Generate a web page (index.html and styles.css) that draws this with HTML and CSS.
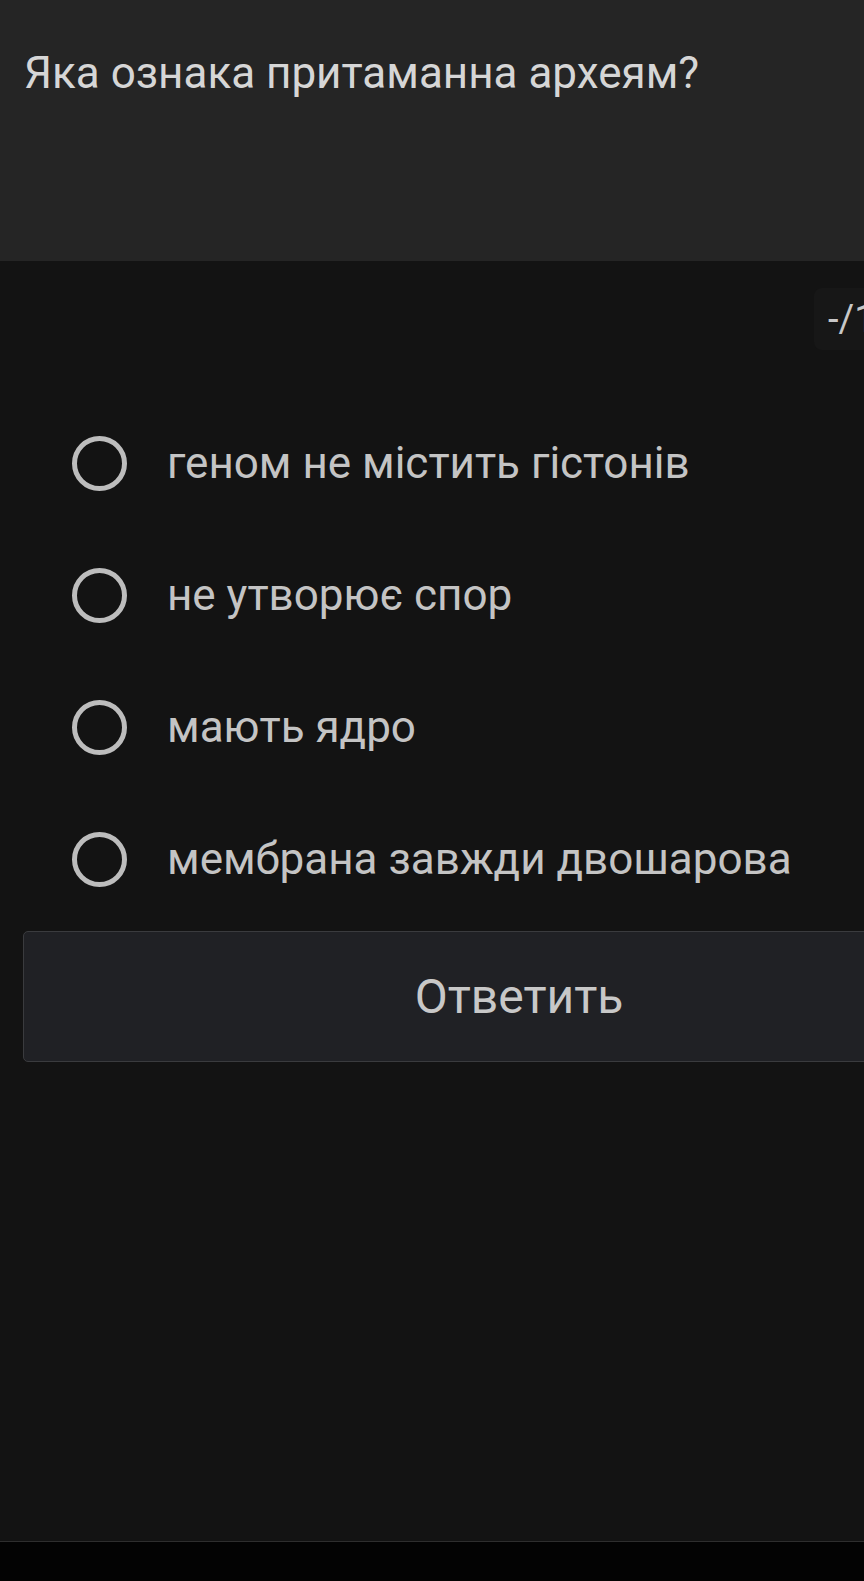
FILE: index.html
```html
<!DOCTYPE html>
<html lang="uk">
<head>
<meta charset="utf-8">
<link rel="stylesheet" href="styles.css">
</head>
<body>
<div class="screen">
  <header class="question">
    <h1 class="question-title">Яка ознака притаманна археям?</h1>
  </header>
  <main class="content">
    <div class="score-row">
      <div class="score">-/1</div>
    </div>
    <ul class="options">
      <li class="option"><span class="radio"></span><span class="option-text">геном не містить гістонів</span></li>
      <li class="option"><span class="radio"></span><span class="option-text">не утворює спор</span></li>
      <li class="option"><span class="radio"></span><span class="option-text">мають ядро</span></li>
      <li class="option"><span class="radio"></span><span class="option-text">мембрана завжди двошарова</span></li>
    </ul>
    <button class="answer">Ответить</button>
  </main>
  <footer class="navbar"></footer>
</div>
</body>
</html>
```
FILE: styles.css
```css
html, body {
  margin: 0;
  padding: 0;
  background: #131313;
  overflow: hidden;
}
.screen {
  width: 1016px;
  height: 1581px;
  display: flex;
  flex-direction: column;
  font-family: Roboto, "Noto Sans", sans-serif;
}
.question {
  height: 261px;
  background: #252525;
  padding: 47px 0 0 24px;
  box-sizing: border-box;
  flex: none;
}
.question-title {
  margin: 0;
  font-weight: 400;
  font-size: 44px;
  line-height: 52px;
  color: #d6d6d6;
}
.content {
  flex: 1;
  display: flex;
  flex-direction: column;
}
.score-row {
  display: flex;
  justify-content: flex-end;
  padding: 27px 112px 0 0;
}
.score {
  width: 90px;
  height: 62px;
  box-sizing: border-box;
  padding-left: 14px;
  background: #171717;
  border-radius: 8px;
  color: #c8c8c8;
  font-size: 38px;
  line-height: 62px;
}
.options {
  list-style: none;
  margin: 0;
  padding: 86px 0 0 72px;
  display: flex;
  flex-direction: column;
  gap: 77px;
}
.option {
  display: flex;
  align-items: center;
  height: 55px;
}
.radio {
  width: 55px;
  height: 55px;
  box-sizing: border-box;
  border: 5px solid #bdbdbd;
  border-radius: 50%;
  flex: none;
  margin-right: 40px;
}
.option-text {
  font-size: 44px;
  color: #c4c4c4;
  line-height: 55px;
}
.answer {
  margin: 44px 0 0 23px;
  width: 992px;
  height: 131px;
  background: #202125;
  border: 1px solid #3a3b3e;
  border-radius: 5px;
  color: #c8c8c8;
  font-family: Roboto, "Noto Sans", sans-serif;
  font-size: 48px;
  padding: 0;
}
.navbar {
  height: 40px;
  flex: none;
  background: #030303;
  border-top: 1px solid #2e2e2e;
  box-sizing: border-box;
}
```
